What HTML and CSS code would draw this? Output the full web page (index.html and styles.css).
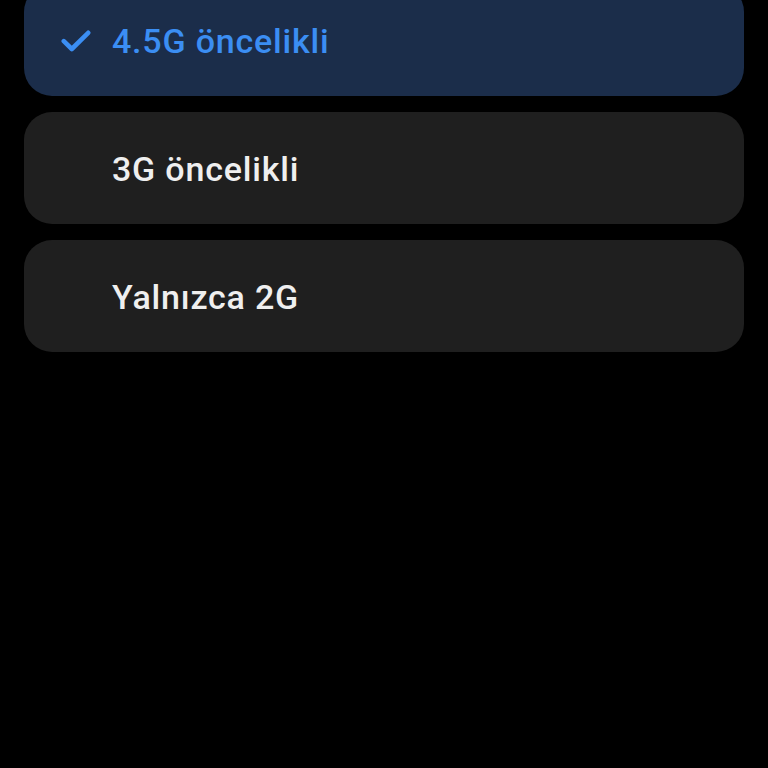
FILE: index.html
```html
<!DOCTYPE html>
<html lang="tr">
<head>
<meta charset="utf-8">
<title>Ağ modu</title>
<link rel="stylesheet" href="styles.css">
</head>
<body>
<ul class="options">
  <li class="option option--selected">
    <span class="check">
      <svg viewBox="0 0 30 22" width="30" height="22"><path d="M2.8 11.2 L10.8 19 L27.2 2.8" fill="none" stroke="currentColor" stroke-width="4.6" stroke-linecap="round" stroke-linejoin="round"/></svg>
    </span>
    <span class="label">4.5G öncelikli</span>
  </li>
  <li class="option">
    <span class="check"></span>
    <span class="label">3G öncelikli</span>
  </li>
  <li class="option">
    <span class="check"></span>
    <span class="label">Yalnızca 2G</span>
  </li>
</ul>
</body>
</html>
```
FILE: styles.css
```css
html, body {
  margin: 0;
  padding: 0;
  background: #000;
  height: 100%;
  overflow: hidden;
}

body {
  font-family: Roboto, "Noto Sans", sans-serif;
}

.options {
  list-style: none;
  margin: -16px 0 0;
  padding: 0 24px;
  display: flex;
  flex-direction: column;
  gap: 16px;
}

.option {
  height: 112px;
  border-radius: 28px;
  background: #1f1f1f;
  display: flex;
  align-items: center;
  color: #efefef;
}

.option--selected {
  background: #1b2d4a;
  color: #3b8ef3;
}

.check {
  width: 88px;
  display: flex;
  justify-content: flex-end;
  padding-right: 21px;
  box-sizing: border-box;
}

.check svg {
  display: block;
  margin-top: 2px;
}

.label {
  font-size: 34px;
  font-weight: 500;
  letter-spacing: 0.8px;
  margin-top: 2px;
}
```
